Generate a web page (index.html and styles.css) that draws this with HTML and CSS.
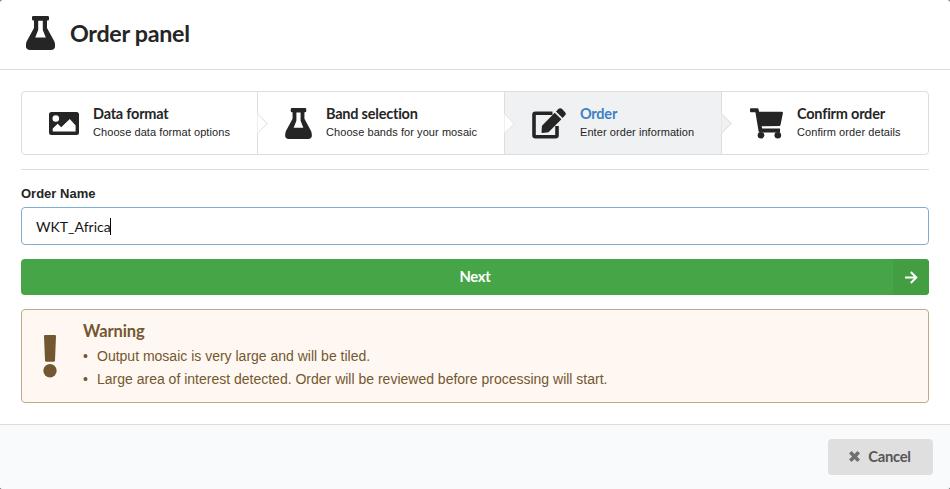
FILE: index.html
```html
<!DOCTYPE html>
<html lang="en">
<head>
<meta charset="utf-8">
<title>Order panel</title>
<link rel="stylesheet" href="styles.css">
</head>
<body>
<svg class="defs" width="0" height="0" aria-hidden="true">
  <symbol id="flask" viewBox="0 0 29 34">
    <path fill-rule="evenodd" d="M7.300 0h14.400q1.300 0 1.300 1.300v2q0 1.300-1.300 1.300H21v7.300l7.400 13.600Q31 33.900 25 33.900H4Q-2 33.900.6 25.500L8 11.900V4.600h-.7Q6 4.600 6 3.300v-2Q6 0 7.300 0zM12.200 4.800v9.200L9.200 21.600h10.600L16.800 14V4.800z"/>
  </symbol>
</svg>
<div class="modal">
  <header class="header">
    <svg class="header-icon"><use href="#flask"/></svg>
    <h1 class="title">Order panel</h1>
  </header>
  <main class="content">
    <div class="steps">
      <div class="step">
        <svg class="icon-image" viewBox="0 0 30 23"><path fill-rule="evenodd" d="M2.500 0h25Q30 0 30 2.500v18Q30 23 27.500 23h-25Q0 23 0 20.500v-18Q0 0 2.500 0zM6.800 3.200a3.300 3.300 0 1 0 0 6.600 3.300 3.300 0 1 0 0-6.600zM3.700 19.400h22.900v-6L20.800 7l-8.600 8.300-3.500-3.500-5 4.800z"/></svg>
        <div class="step-body"><div class="step-title">Data format</div><div class="step-text">Choose data format options</div></div>
      </div>
      <div class="step">
        <svg class="icon-flask"><use href="#flask"/></svg>
        <div class="step-body"><div class="step-title">Band selection</div><div class="step-text">Choose bands for your mosaic</div></div>
      </div>
      <div class="step active">
        <svg class="icon-edit" viewBox="0 0 34 31"><path fill="none" stroke="currentColor" stroke-width="3.600" d="M20.500 5.200H3.500q-1.500 0-1.500 1.500v20.500q0 1.500 1.500 1.500h20q1.500 0 1.500-1.500V18"/><path d="M10 17.800 22.700 4.700l6.700 6.500L16.500 24.300l-6.100.7q-1 0-.9-1zM24 3.400l2.300-2.300q1.900-1.800 3.800 0l2.800 2.800q1.900 1.800 0 3.700l-2.300 2.300z"/></svg>
        <div class="step-body"><div class="step-title">Order</div><div class="step-text">Enter order information</div></div>
      </div>
      <div class="step">
        <svg class="icon-cart" viewBox="0 0 33 31"><path d="M1 .2h6.500q.8 0 1 .9l.6 2.600h22.600q1.500 0 1.200 1.500l-2.100 10.600q-.2 2-1.200 2.100l-18 .4.6 2.200h17.800v4H10q-1.200 0-1.400-1.200L5.400 4.200H1Q0 4.200 0 3.200v-2Q0 .2 1 .2z"/><circle cx="11" cy="27.200" r="3.300"/><circle cx="27.800" cy="27.200" r="3.300"/></svg>
        <div class="step-body"><div class="step-title">Confirm order</div><div class="step-text">Confirm order details</div></div>
      </div>
    </div>
    <hr class="divider">
    <label class="label" for="name">Order Name</label>
    <div class="input" id="name" role="textbox"><span>WKT_Africa</span><i class="caret"></i></div>
    <button class="next"><span class="next-label">Next</span><span class="next-icon"><svg width="14" height="13" viewBox="0 0 14 13"><path fill="none" stroke="currentColor" stroke-width="2" d="M1 6.500h11M6.800 1l5.500 5.500L6.800 12"/></svg></span></button>
    <section class="warning">
      <svg class="bang" viewBox="0 0 14 43"><path d="M2.200 0h9.600q1.300 0 1.200 1.300L12 25.500q-.1 1.300-1.200 1.300H3.200Q2.100 26.800 2 25.500L1 1.300Q.9 0 2.200 0z"/><circle cx="7" cy="35.700" r="6.700"/></svg>
      <div>
        <h2 class="warning-title">Warning</h2>
        <ul class="list">
          <li>Output mosaic is very large and will be tiled.</li>
          <li>Large area of interest detected. Order will be reviewed before processing will start.</li>
        </ul>
      </div>
    </section>
  </main>
  <footer class="footer">
    <button class="cancel"><svg width="11" height="11" viewBox="0 0 11 11"><path stroke="currentColor" stroke-width="3.600" d="M1.300 1.300l8.400 8.400M9.700 1.300L1.300 9.700"/></svg><span>Cancel</span></button>
  </footer>
</div>
</body>
</html>
```
FILE: styles.css
```css
* { box-sizing: border-box; }
body { margin: 0; background: #777; color: #252525; font-family: "Liberation Sans", Arial, sans-serif; }
svg { fill: currentColor; flex: none; display: block; }
.defs { position: absolute; }
.modal { height: 489px; display: flex; flex-direction: column; background: #fff; border-radius: 3px; overflow: hidden; }
.header { height: 70px; flex: none; display: flex; align-items: center; padding: 0 26px 3px; gap: 15px; border-bottom: 1px solid #dbdcdc; }
.header-icon { width: 29px; height: 34px; }
.title { margin: 0; padding-bottom: 1px; font: 700 23.300px/28px Lato, sans-serif; letter-spacing: -.3px; }
.content { flex: 1; padding: 21px 21px 0; }
.steps { display: grid; grid-template-columns: 236px 247px 217px 206px; height: 64px; border: 1px solid #dcddde; border-radius: 4px; }
.step { position: relative; display: flex; align-items: center; padding-left: 27px; gap: 14px; border-right: 1px solid #dcddde; }
.step:last-child { border-right: 0; padding-left: 28px; }
.step:not(:last-child)::after { content: ""; position: absolute; z-index: 1; right: -8px; top: 24px; width: 14px; height: 14px; background: #fff; border: solid #dcddde; border-width: 1px 1px 0 0; transform: rotate(45deg); clip-path: polygon(0 0, 100% 0, 100% 100%); }
.step.active, .step.active::after { background: #f0f1f3; }
.step-body { padding-bottom: 2px; }
.step-title { font: 700 14.500px/18px Lato, sans-serif; letter-spacing: -.22px; }
.active .step-title { color: #3e80c3; }
.step-text { margin-top: 1px; font-size: 11px; line-height: 16px; letter-spacing: .07px; white-space: nowrap; }
.icon-image { width: 30px; height: 23px; }
.icon-flask { width: 27px; height: 31px; }
.icon-edit { width: 34px; height: 31px; }
.icon-cart { width: 33px; height: 31px; }
.divider { margin: 14px 0; border: 0; border-top: 1px solid #dcddde; }
.label { display: block; height: 23px; font-weight: 700; font-size: 13px; line-height: 19px; }
.input { display: flex; align-items: center; height: 38px; padding: 1px 14px 0; border: 1px solid #7fadd2; border-radius: 4px; font: 14px/20px Lato, sans-serif; color: #151515; }
.caret { width: 1px; height: 17px; margin: -1px 0 0 -1px; background: #000; }
.next { display: flex; width: 100%; height: 36px; margin: 14px 0; padding: 0; border: 0; border-radius: 4px; overflow: hidden; background: #46a546; color: #fff; font: 700 14.800px/34px Lato, sans-serif; letter-spacing: -.3px; }
.next-label { flex: 1; padding-left: 36px; }
.next-icon { width: 36px; height: 36px; background: #429d43; display: flex; align-items: center; justify-content: center; }
.warning { display: flex; height: 94px; padding: 11px 20px; gap: 26px; border: 1px solid #bcab8a; border-radius: 4px; background: #fff8f2; color: #735730; }
.bang { width: 14px; height: 43px; margin-top: 14px; margin-left: 1px; }
.warning-title { margin: 0; font: 700 16.500px/20px Lato, sans-serif; letter-spacing: -.1px; }
.list { margin: 4px 0 0; padding: 0 0 0 14px; list-style: none; font-size: 14px; line-height: 23px; white-space: nowrap; }
.list li::before { content: "•"; display: inline-block; width: 14px; margin-left: -14px; }
.footer { height: 65px; flex: none; border-top: 1px solid #dcdddd; background: #f9fafb; display: flex; justify-content: flex-end; padding: 14px 17px; }
.cancel { width: 105px; height: 36px; padding: 0 1px 1px 0; border: 0; border-radius: 4px; background: #dfdfdf; color: #575757; display: flex; align-items: center; justify-content: center; gap: 8px; font: 700 14.800px/20px Lato, sans-serif; letter-spacing: -.3px; }
.cancel span { padding-bottom: 2px; }
.cancel svg { color: #707070; }
```
